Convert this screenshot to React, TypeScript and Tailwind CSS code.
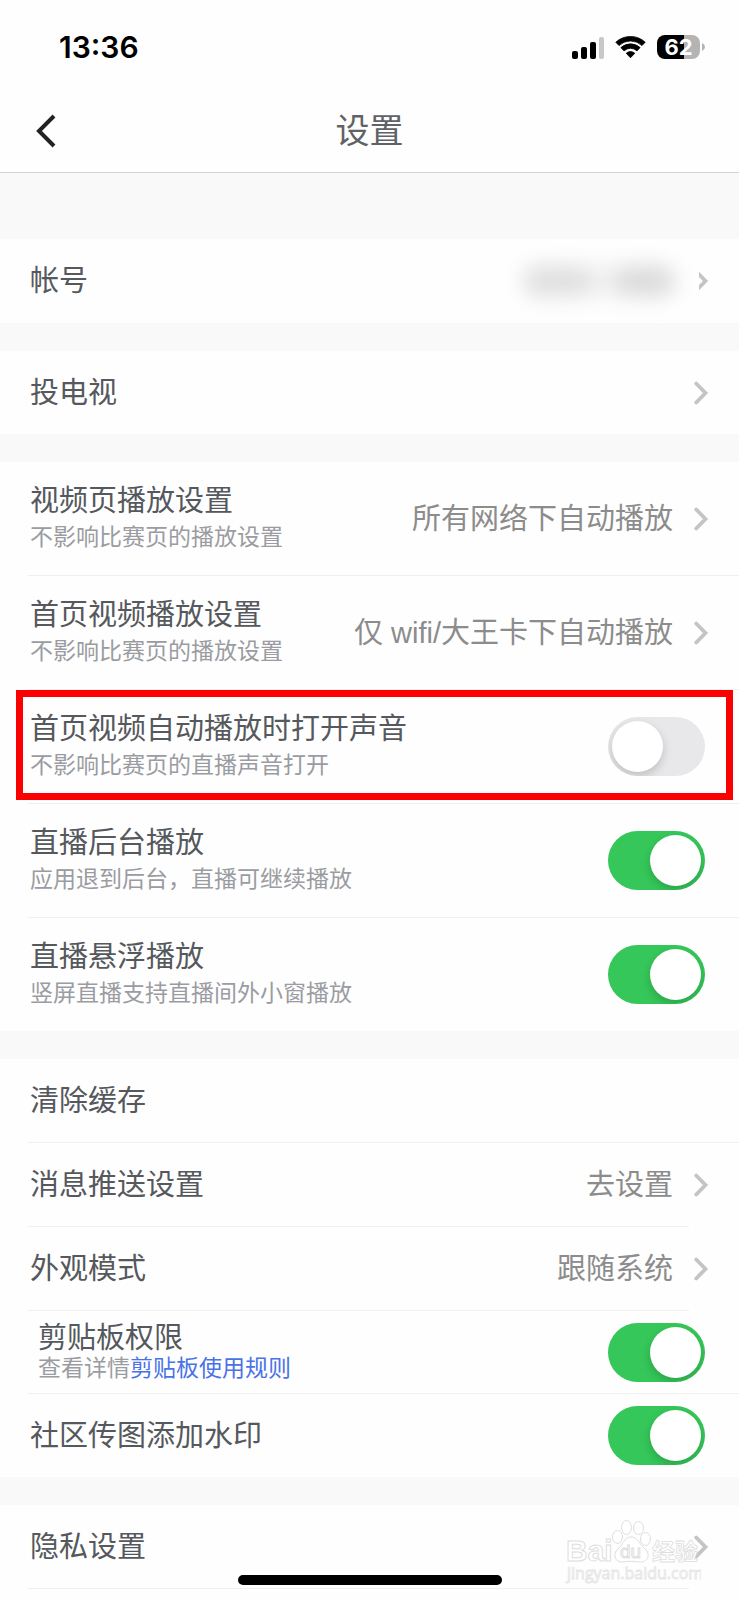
import React, { useState } from 'react';
import clsx from 'clsx';

type RowProps = {
  title: string;
  subtitle?: React.ReactNode;
  children?: React.ReactNode;
  size?: 'base' | 'tall' | 'compact';
  line?: 'full' | 'short' | 'none';
};

const rowHeight = {
  base: 'h-[83px]',
  tall: 'h-[113px] pb-1',
  compact: 'h-[82px]',
};

const StatusBar: React.FC = () => (
  <div className="flex h-[94px] items-center justify-between pr-[34px] pl-[59px]">
    <span className="font-[Inter] text-[30px] leading-8 font-semibold text-black">13:36</span>
    <div className="flex items-center gap-[11px]">
      <svg className="h-[23px] w-8" viewBox="0 0 32 23">
        <rect x="0" y="15" width="6" height="8" rx="2" />
        <rect x="9" y="11" width="6" height="12" rx="2" />
        <rect x="18" y="6" width="6" height="17" rx="2" />
        <rect x="27" y="1" width="5" height="22" rx="2" fill="#c8c8c8" />
      </svg>
      <svg className="h-[23px] w-[31px]" viewBox="0 0 31 23">
        <path d="M0.8 6.2 A21.5 21.5 0 0 1 30.2 6.2 L27 9.6 A16.6 16.6 0 0 0 4 9.6 Z" stroke="#000" strokeWidth="0.8" strokeLinejoin="round" />
        <path d="M5.9 11.6 A14.2 14.2 0 0 1 25.1 11.6 L22 14.9 A9.4 9.4 0 0 0 9 14.9 Z" stroke="#000" strokeWidth="0.8" strokeLinejoin="round" />
        <path d="M11.2 17.2 A6.9 6.9 0 0 1 19.8 17.2 L15.5 21.8 Z" stroke="#000" strokeWidth="0.8" strokeLinejoin="round" />
      </svg>
      <div className="flex items-center gap-[2px]">
        <div className="flex h-6 w-[43px] items-center justify-center rounded-lg bg-linear-to-r from-black from-62% to-[#b4b4b4] to-62%">
          <span className="font-[Inter] text-[22px] leading-6 font-bold text-white">62</span>
        </div>
        <svg className="h-2 w-[3px]" viewBox="0 0 3 8">
          <path d="M0 0 Q3 1.5 3 4 Q3 6.5 0 8 Z" fill="#b4b4b4" />
        </svg>
      </div>
    </div>
  </div>
);

const Chevron: React.FC = () => (
  <svg className="h-6 w-4 shrink-0" viewBox="0 0 16 24" fill="none">
    <path d="M3.2 2.5 L12.5 12 L3.2 21.5" stroke="#c4c4c4" strokeWidth="3.8" strokeLinecap="round" />
  </svg>
);

const Value: React.FC<{ text?: string; label: string }> = ({ text, label }) => (
  <button type="button" aria-label={label} className="flex items-center gap-5 text-[29px] leading-10 text-[#8c8c8c]">
    {text && <span>{text}</span>}
    <Chevron />
  </button>
);

const Toggle: React.FC<{ label: string; initial?: boolean }> = ({ label, initial = false }) => {
  const [on, setOn] = useState(initial);

  return (
    <label className={clsx('relative mr-1 flex h-[59px] w-[97px] shrink-0 items-center overflow-hidden rounded-full p-1 transition-colors', on ? 'justify-end bg-[#35c759]' : 'justify-start bg-[#e8e8ea]')}>
      <input type="checkbox" role="switch" aria-label={label} checked={on} onChange={() => setOn(!on)} className="absolute inset-0 appearance-none" />
      <span className="size-[51px] rounded-full bg-white shadow-[0_4px_10px_rgba(0,0,0,0.18)]" />
    </label>
  );
};

const Row: React.FC<RowProps> = ({ title, subtitle, children, size = 'base', line = 'full' }) => {
  const compact = size === 'compact';

  return (
    <div className="pl-7">
      <div className="flex items-center justify-between pr-[30px]">
        <div className={clsx('flex flex-col justify-center', rowHeight[size], compact ? 'pl-[10px]' : 'pl-[2px]')}>
          <h2 className={clsx('text-[29px] text-[#55585c]', compact ? 'leading-8' : 'leading-10')}>{title}</h2>
          {subtitle && <p className={clsx('text-[23px] text-[#9a9ca2]', compact ? 'leading-7' : 'leading-8')}>{subtitle}</p>}
        </div>
        {children}
      </div>
      {line !== 'none' && <div className={clsx('h-px bg-[#f0f0f1]', line === 'short' && 'mr-[50px]')} />}
    </div>
  );
};

const Watermark: React.FC = () => (
  <svg className="absolute right-[38px] bottom-1 h-20 w-[136px]" viewBox="0 0 136 80" fill="#fff" stroke="#dedede" strokeWidth="1">
    <text x="1" y="45" fontFamily="Liberation Sans" fontWeight="bold" fontSize="30">Bai</text>
    <path d="M66 21 C59 21 58 29 53 33 C47 38 50 47 58 46 C63 45 69 45 74 46 C83 47 86 38 80 33 C75 29 73 21 66 21 Z" />
    <ellipse cx="52.5" cy="21" rx="5" ry="6.5" />
    <ellipse cx="61.5" cy="11.5" rx="5" ry="7" />
    <ellipse cx="73.5" cy="12" rx="5" ry="6.5" />
    <ellipse cx="80.5" cy="23" rx="5" ry="6.5" />
    <text x="55" y="42" fontFamily="Liberation Sans" fontSize="19">du</text>
    <text x="87" y="44" fontFamily="Noto Sans CJK SC" fontWeight="bold" fontSize="23" strokeWidth="0.8">经验</text>
    <text x="2" y="63" fontFamily="Open Sans" fontSize="16" stroke="#e4e4e4" strokeWidth="0.8">jingyan.baidu.com</text>
  </svg>
);

const App: React.FC = () => {
  return (
    <main className="relative flex min-h-screen flex-col overflow-hidden bg-[#f9f9f9] font-['Liberation_Sans','Noto_Sans_CJK_SC',sans-serif]">
      <header className="border-b border-[#d3d3d3] bg-[#fefefe]">
        <StatusBar />
        <div className="grid h-[78px] grid-cols-[1fr_auto_1fr] items-center px-[34px] pb-1">
          <button type="button" aria-label="返回" className="w-6">
            <svg className="h-9 w-6" viewBox="0 0 24 36" fill="none">
              <path d="M20 3 L5 18 L20 33" stroke="#222" strokeWidth="4" />
            </svg>
          </button>
          <h1 className="text-[34px] leading-[48px] text-[#606266]">设置</h1>
        </div>
      </header>

      <div className="mt-[66px] flex grow flex-col gap-7">
        <section className="bg-[#fefefe] pb-px">
          <Row title="帐号" line="none">
            <div className="flex items-center">
              {/* masked account name */}
              <div className="mr-6 flex justify-between gap-6 rounded-full bg-[#f0f0f0] blur-[10px]">
                <span className="h-8 w-17 rounded-full bg-[#e0e0e0]" />
                <span className="h-8 w-15 rounded-full bg-[#dcdcdc]" />
              </div>
              <button type="button" aria-label="帐号" className="flex w-[10px] justify-end overflow-hidden">
                <Chevron />
              </button>
            </div>
          </Row>
        </section>

        <section className="bg-[#fefefe]">
          <Row title="投电视" line="none">
            <Value label="投电视" />
          </Row>
        </section>

        <section className="bg-[#fefefe]">
          <Row size="tall" title="视频页播放设置" subtitle="不影响比赛页的播放设置">
            <Value label="视频页播放设置" text="所有网络下自动播放" />
          </Row>
          <Row size="tall" title="首页视频播放设置" subtitle="不影响比赛页的播放设置">
            <Value label="首页视频播放设置" text="仅 wifi/大王卡下自动播放" />
          </Row>
          <div className="relative">
            <Row size="tall" title="首页视频自动播放时打开声音" subtitle="不影响比赛页的直播声音打开">
              <Toggle label="首页视频自动播放时打开声音" />
            </Row>
            <div className="pointer-events-none absolute top-0 right-[6px] bottom-1 left-4 border-[7px] border-[#fb0000]" />
          </div>
          <Row size="tall" title="直播后台播放" subtitle="应用退到后台，直播可继续播放">
            <Toggle label="直播后台播放" initial />
          </Row>
          <Row size="tall" title="直播悬浮播放" subtitle="竖屏直播支持直播间外小窗播放" line="none">
            <Toggle label="直播悬浮播放" initial />
          </Row>
        </section>

        <section className="bg-[#fefefe]">
          <Row title="清除缓存" />
          <Row title="消息推送设置" line="short">
            <Value label="消息推送设置" text="去设置" />
          </Row>
          <Row title="外观模式" line="short">
            <Value label="外观模式" text="跟随系统" />
          </Row>
          <Row
            size="compact"
            title="剪贴板权限"
            subtitle={
              <>
                查看详情<a href="#rules" className="text-[#4a72e8]">剪贴板使用规则</a>
              </>
            }
          >
            <Toggle label="剪贴板权限" initial />
          </Row>
          <Row title="社区传图添加水印" line="none">
            <Toggle label="社区传图添加水印" initial />
          </Row>
        </section>

        <section className="grow bg-[#fefefe]">
          <Row title="隐私设置" line="short">
            <Value label="隐私设置" />
          </Row>
        </section>
      </div>

      <Watermark />
      <div className="absolute bottom-[15px] left-1/2 h-[10px] w-[264px] -translate-x-1/2 rounded-full bg-black" />
    </main>
  );
};

export default App;
